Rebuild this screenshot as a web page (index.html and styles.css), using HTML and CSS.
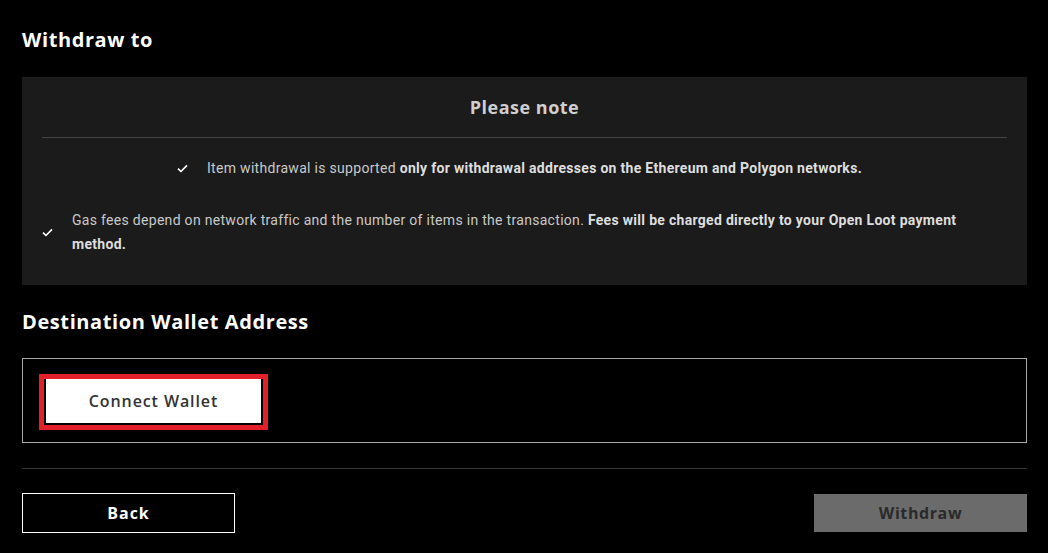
FILE: index.html
```html
<!DOCTYPE html>
<html lang="en">
<head>
  <meta charset="UTF-8" />
  <meta name="viewport" content="width=device-width, initial-scale=1" />
  <title>Withdraw</title>
  <link rel="stylesheet" href="styles.css">
</head>
<body>
  <main class="withdraw">
    <h1 class="section-title">Withdraw to</h1>

    <!-- Nota -->
    <div class="note">
      <h2 class="note-title">Please note</h2>
      <ul class="note-list">
        <li>
          <svg class="check" viewBox="0 0 12 10" width="11" height="9"><path d="M1 5.2 L4.3 8.3 L11 1.5" fill="none" stroke="#fff" stroke-width="1.8"/></svg>
          <span>Item withdrawal is supported <b>only for withdrawal addresses on the Ethereum and Polygon networks.</b></span>
        </li>
        <li>
          <svg class="check" viewBox="0 0 12 10" width="11" height="9"><path d="M1 5.2 L4.3 8.3 L11 1.5" fill="none" stroke="#fff" stroke-width="1.8"/></svg>
          <span>Gas fees depend on network traffic and the number of items in the transaction. <b>Fees will be charged directly to your Open Loot payment method.</b></span>
        </li>
      </ul>
    </div>

    <h2 class="section-title sub">Destination Wallet Address</h2>

    <div class="wallet-box">
      <div class="highlight">
        <button class="btn-connect">Connect Wallet</button>
      </div>
    </div>

    <div class="actions">
      <button class="btn-back">Back</button>
      <button class="btn-withdraw" disabled>Withdraw</button>
    </div>
  </main>
</body>
</html>
```

FILE: styles.css
```css
body {
  margin: 0;
  background-color: #000;
  color: #fff;
  font-family: "Open Sans", Arial, sans-serif;
}

.withdraw {
  padding: 26px 21px 20px 22px;
}

.section-title {
  margin: 0 0 23px;
  font-size: 20px;
  line-height: 28px;
  font-weight: 700;
  letter-spacing: 0.6px;
  color: #fff;
}
.section-title.sub {
  margin: 23px 0 22px;
}

.note {
  background-color: #1b1b1b;
  padding: 18px 20px 29px;
}
.note-title {
  margin: 0;
  padding-bottom: 18px;
  border-bottom: 1px solid #454545;
  text-align: center;
  font-size: 18px;
  line-height: 24px;
  font-weight: 700;
  letter-spacing: 0.5px;
  color: #cfcfcf;
}
.note-list {
  list-style: none;
  margin: 18px 0 0;
  padding: 0;
  font-family: Roboto, Arial, sans-serif;
  font-size: 14px;
  line-height: 24px;
  letter-spacing: 0.3px;
  color: #c9c9c9;
}
.note-list li {
  display: flex;
  justify-content: center;
  align-items: center;
  gap: 19px;
  padding-right: 10px;
}
.note-list li + li {
  margin-top: 28px;
}
.note-list b {
  color: #dedede;
  font-weight: 700;
}
.check {
  flex-shrink: 0;
}

.wallet-box {
  border: 1px solid #a8a8a8;
  padding: 15px 16px 12px;
}
.highlight {
  display: inline-block;
  border: 5px solid #e3202a;
  background: #000;
  padding: 0 2px 2px;
}
.btn-connect {
  display: block;
  width: 215px;
  height: 44px;
  background: #fff;
  border: none;
  font-family: "Open Sans", Arial, sans-serif;
  font-size: 16px;
  font-weight: 600;
  letter-spacing: 0.9px;
  color: #333;
  cursor: pointer;
}

.actions {
  margin-top: 25px;
  border-top: 1px solid #333;
  padding-top: 24px;
  display: flex;
  justify-content: space-between;
  align-items: center;
}
.btn-back {
  width: 213px;
  height: 40px;
  background: #000;
  border: 1px solid #fff;
  color: #fff;
  font-family: "Open Sans", Arial, sans-serif;
  font-size: 16px;
  font-weight: 700;
  letter-spacing: 1px;
  cursor: pointer;
}
.btn-withdraw {
  width: 213px;
  height: 38px;
  background: #6b6b6b;
  border: none;
  color: #2a2a2a;
  font-family: "Open Sans", Arial, sans-serif;
  font-size: 16px;
  font-weight: 700;
  letter-spacing: 0.6px;
}
```
